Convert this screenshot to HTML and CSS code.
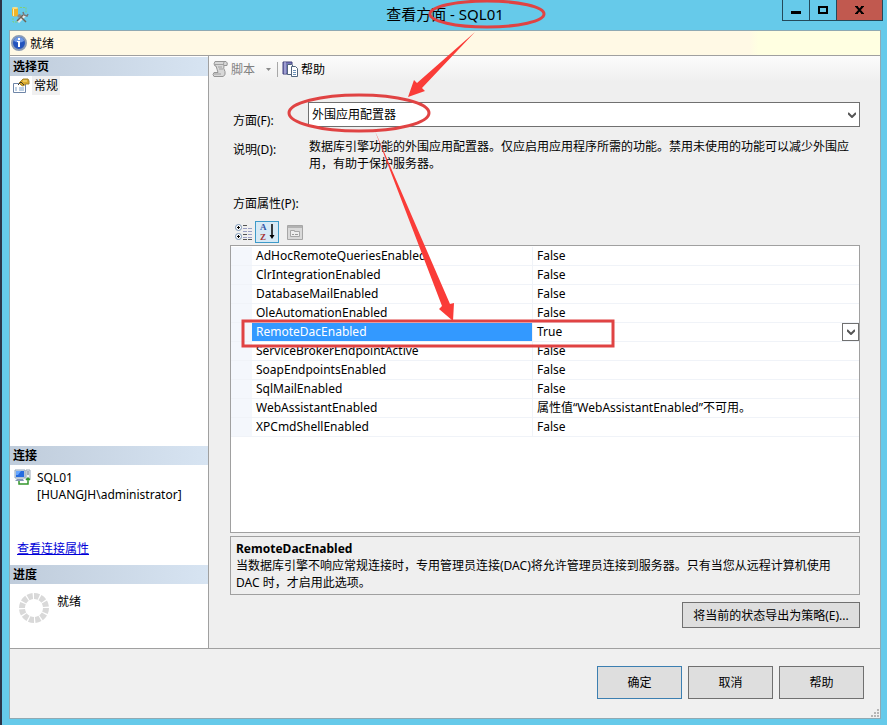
FILE: index.html
```html
<!DOCTYPE html>
<html lang="zh-CN">
<head>
    <meta charset="UTF-8">
    <meta name="viewport" content="width=device-width, initial-scale=1.0">
    <title>查看方面 - SQL01</title>
    <link rel="stylesheet" href="styles.css">
</head>
<body>
    <div class="window">
        <header class="titlebar">
            <svg class="app-icon" width="18" height="18" viewBox="0 0 18 18">
                <path d="M1 2v7c0 2 6 2 6 0V2z" fill="#f0b428"/>
                <path d="M2 3v7h1V3z" fill="#fff0a8"/>
                <ellipse cx="4" cy="2" rx="3" ry="1" fill="#fbe08a"/>
                <path d="M9 1.500h6v5M2 12v4h4" fill="none" stroke="#7fcf7a" stroke-dasharray="2 1"/>
                <path d="M7 16l7-7" stroke="#e8e8e8" stroke-width="3"/>
                <path d="M6 15l6-6M8 9l7 7" stroke="#6d6455" stroke-width="1.500"/>
                <path d="M12 6l1 3 3 1 1-2" fill="none" stroke="#777" stroke-width="1.500"/>
                <path d="M6 10l2-2 3 1-3 3z" fill="#8b8b8b"/>
            </svg>
            <h1>查看方面 - SQL01</h1>
            <div class="window-buttons">
                <button class="win-btn" aria-label="最小化">
                    <svg width="10" height="10" viewBox="0 0 10 10"><path d="M0 6h10v3H0z"/></svg>
                </button>
                <button class="win-btn" aria-label="最大化">
                    <svg width="10" height="8" viewBox="0 0 10 8"><path d="M1 1h8v6H1z" fill="none" stroke="#000" stroke-width="2"/></svg>
                </button>
                <button class="win-btn close" aria-label="关闭">
                    <svg width="10" height="8" viewBox="0 0 10 8"><path d="M1 0l7 8M8 0L1 8" stroke="#000" stroke-width="2"/><path d="M0 0h3v1H0zM6 0h3v1H6zM0 7h3v1H0zM6 7h3v1H6z"/></svg>
                </button>
            </div>
        </header>

        <div class="client">
            <div class="status">
                <svg width="16" height="16" viewBox="0 0 16 16">
                    <circle cx="8" cy="8" r="7" fill="#2354bd" stroke="#8a9bb5" stroke-width="2"/>
                    <path d="M3 6a5 4 0 0 1 10 0q-5 3-10 0" fill="#6f9ae6"/>
                    <path d="M7 3h2v2H7zM6 6h3v6H7V7H6z" fill="#fff"/>
                </svg>
                <span>就绪</span>
            </div>

            <div class="content">
                <aside class="sidebar">
                    <section class="pages">
                        <h2>选择页</h2>
                        <a href="#" class="page-link">
                            <svg width="17" height="16" viewBox="0 0 17 16">
                                <path d="M.5 5.500h12v9H.5z" fill="#fff" stroke="#6f86a8"/>
                                <path d="M2 10h2M2 12h2M6 10h5M6 12h5" stroke="#7aa0c8"/>
                                <path d="M6 5l4-4h5l1 2v3h-3l-3 2-2-1z" fill="#d9a92c" stroke="#a3852f"/>
                                <path d="M10 3h4" stroke="#ffe88c"/>
                                <path d="M5 7l3-3 3 3" fill="none" stroke="#443c28"/>
                            </svg>
                            <span>常规</span>
                        </a>
                    </section>
                    <section class="connection">
                        <h2>连接</h2>
                        <div class="server">
                            <svg width="17" height="16" viewBox="0 0 17 16">
                                <path d="M1 1h10v8H1z" fill="#d8e2ee" stroke="#8ea5bd"/>
                                <path d="M2 2h8v6H2z" fill="#246be0"/>
                                <path d="M2 2h5L4 6H2z" fill="#65a6ff"/>
                                <path d="M3 10h6l1 2H1z" fill="#8499b5"/>
                                <path d="M12 1h4v9h-4z" fill="#eef2f6" stroke="#97a6b5"/>
                                <path d="M13 3h2M13 5h2" stroke="#5f7184"/>
                                <path d="M5 12v3h9V9M12 11l2-2 2 2" fill="none" stroke="#35962d" stroke-width="1.500"/>
                            </svg>
                            <p>SQL01<br>[HUANGJH\administrator]</p>
                        </div>
                        <a href="#" class="properties-link">查看连接属性</a>
                    </section>
                    <section class="progress">
                        <h2>进度</h2>
                        <div class="progress-row">
                            <svg width="30" height="30" viewBox="0 0 30 30">
                                <circle cx="15" cy="15" r="12" pathLength="120" fill="none" stroke="#d9d9d9" stroke-width="6" stroke-dasharray="8 2"/>
                            </svg>
                            <span>就绪</span>
                        </div>
                    </section>
                </aside>

                <main class="main">
                    <div class="toolbar">
                        <button class="tool" disabled>
                            <svg width="17" height="16" viewBox="0 0 17 16">
                                <path d="M3 .5h11q2 1 1 4h-3q-1 3 1 6 1 4-2 5H2q-2-2 0-4h4Q5 8 4 5H3q-2-2 0-4.500z" fill="#d8d8d8" stroke="#969696"/>
                                <path d="M3 3.500h9M12 5q-1-2 0-4M2 13h7M6 6h4M7 8h4" fill="none" stroke="#a2a2a2"/>
                            </svg>
                            <span>脚本</span>
                            <svg class="caret" width="5" height="3" viewBox="0 0 5 3"><path d="M0 0h5L2.500 3z" fill="#8a8a8a"/></svg>
                        </button>
                        <span class="separator"></span>
                        <button class="tool">
                            <svg width="17" height="16" viewBox="0 0 17 16">
                                <path d="M1 1h9v12H1z" fill="#7676b8" stroke="#42427d"/>
                                <path d="M3 1v12" stroke="#c5c5e8"/>
                                <path d="M5.500 3.500h4l2 2v8h-6z" fill="#fff" stroke="#51657d"/>
                                <path d="M9.500 5.500h4l2 2v8h-6z" fill="#fff" stroke="#51657d"/>
                                <path d="M11 9.500h3M11 11.500h3M11 13.500h3" stroke="#6c92b8"/>
                            </svg>
                            <span>帮助</span>
                        </button>
                    </div>

                    <div class="form">
                        <div class="field">
                            <label for="facet">方面(F):</label>
                            <div class="select-box">
                                <select id="facet">
                                    <option>外围应用配置器</option>
                                </select>
                                <svg class="chevron" width="8" height="6" viewBox="0 0 8 6"><path d="M0 1l4 4 4-4" fill="none" stroke="#555" stroke-width="2"/></svg>
                            </div>
                        </div>
                        <div class="description">
                            <span>说明(D):</span>
                            <p>数据库引擎功能的外围应用配置器。仅应启用应用程序所需的功能。禁用未使用的功能可以减少外围应用，有助于保护服务器。</p>
                        </div>

                        <p class="grid-label">方面属性(P):</p>
                        <div class="grid-tools">
                            <button aria-label="按分类顺序">
                                <svg width="17" height="16" viewBox="0 0 17 16">
                                    <circle cx="3.500" cy="3.500" r="3" fill="#fff" stroke="#7590b0"/>
                                    <circle cx="3.500" cy="12.500" r="3" fill="#fff" stroke="#7590b0"/>
                                    <path d="M2 3.500h3M3.500 2v3M2 12.500h3M3.500 11v3" stroke="#000"/>
                                    <path d="M8 1.500h4M8 10.500h4M8 15.500h4M13 15.500h4" stroke="#555"/>
                                    <path d="M8 4.500h4M13 4.500h4M8 7.500h4M13 7.500h4M13 10.500h4M8 13.500h4M13 13.500h4" stroke="#9a9fc4"/>
                                </svg>
                            </button>
                            <button class="pressed" aria-label="按字母顺序">
                                <svg width="18" height="20" viewBox="0 0 18 20">
                                    <text class="letter-a" x="2" y="8">A</text>
                                    <text class="letter-z" x="2" y="18">Z</text>
                                    <path d="M14 2v13" stroke="#000" stroke-width="1.500"/>
                                    <path d="M11.500 13h5L14 17z"/>
                                </svg>
                            </button>
                            <button aria-label="属性页" disabled>
                                <svg width="16" height="15" viewBox="0 0 16 15">
                                    <path d="M.5.5h15v14H.5z" fill="#d9d9d9" stroke="#a6a6a6"/>
                                    <path d="M1 2h14" stroke="#b2b2b2" stroke-width="2"/>
                                    <path d="M3.500 5.500h4v1h5v5h-9z" fill="#eee" stroke="#a6a6a6"/>
                                    <path d="M5 9.500h2M8 9.500h3" stroke="#999"/>
                                </svg>
                            </button>
                        </div>

                        <div class="grid">
                            <table>
                                <tbody>
                                    <tr><td class="gutter"></td><th scope="row">AdHocRemoteQueriesEnabled</th><td>False</td></tr>
                                    <tr><td class="gutter"></td><th scope="row">ClrIntegrationEnabled</th><td>False</td></tr>
                                    <tr><td class="gutter"></td><th scope="row">DatabaseMailEnabled</th><td>False</td></tr>
                                    <tr><td class="gutter"></td><th scope="row">OleAutomationEnabled</th><td>False</td></tr>
                                    <tr class="selected">
                                        <td class="gutter"></td>
                                        <th scope="row">RemoteDacEnabled</th>
                                        <td>
                                            <div class="value">
                                                <span>True</span>
                                                <button aria-label="选择值">
                                                    <svg width="8" height="6" viewBox="0 0 8 6"><path d="M0 1l4 4 4-4" fill="none" stroke="#555" stroke-width="2"/></svg>
                                                </button>
                                            </div>
                                        </td>
                                    </tr>
                                    <tr><td class="gutter"></td><th scope="row">ServiceBrokerEndpointActive</th><td>False</td></tr>
                                    <tr><td class="gutter"></td><th scope="row">SoapEndpointsEnabled</th><td>False</td></tr>
                                    <tr><td class="gutter"></td><th scope="row">SqlMailEnabled</th><td>False</td></tr>
                                    <tr><td class="gutter"></td><th scope="row">WebAssistantEnabled</th><td>属性值“WebAssistantEnabled”不可用。</td></tr>
                                    <tr><td class="gutter"></td><th scope="row">XPCmdShellEnabled</th><td>False</td></tr>
                                </tbody>
                            </table>
                        </div>

                        <div class="help-box">
                            <h3>RemoteDacEnabled</h3>
                            <p>当数据库引擎不响应常规连接时，专用管理员连接(DAC)将允许管理员连接到服务器。只有当您从远程计算机使用 DAC 时，才启用此选项。</p>
                        </div>
                        <button class="export-btn">将当前的状态导出为策略(E)...</button>
                    </div>
                </main>
            </div>

            <footer class="footer">
                <button class="default">确定</button>
                <button>取消</button>
                <button>帮助</button>
                <svg class="grip" width="8" height="8" viewBox="0 0 8 8"><path d="M6 0h2v2H6zM3 3h2v2H3zM6 3h2v2H6zM0 6h2v2H0zM3 6h2v2H3zM6 6h2v2H6z" fill="#b5b5b5"/></svg>
            </footer>
        </div>
    </div>

    <!-- red markup over the dialog -->
    <svg class="markup" width="640" height="360" viewBox="0 0 640 360">
        <ellipse cx="487" cy="14" rx="57" ry="13"/>
        <ellipse cx="359" cy="113" rx="70" ry="18"/>
        <rect x="243" y="321" width="370" height="25"/>
        <path class="arrow" d="M475 32L417 83l-3-3-6 17 17-6-3-3z"/>
        <path class="arrow" d="M375 131L442 306l-3 3 14 12 1-18-4 1z"/>
    </svg>
</body>
</html>
```
FILE: styles.css
```css
*, *::before, *::after {
    box-sizing: border-box;
}

body {
    margin: 0;
    font-family: "Noto Sans", "Noto Sans CJK SC", sans-serif;
    font-size: 12px;
    line-height: 17px;
    color: #000;
}

h1, h2, h3, p {
    margin: 0;
    font-size: 12px;
}

button, select {
    font: inherit;
    color: inherit;
}

.window {
    display: flex;
    flex-direction: column;
    min-height: 100vh;
    padding: 0 6px 6px 7px;
    background-color: #66caea;
    border-left: 2px solid #2c3448;
}

/* Title bar */
.titlebar {
    display: grid;
    grid-template-columns: 120px 1fr 120px;
    height: 30px;
}

.app-icon {
    margin: 6px 0 0 2px;
}

.titlebar h1 {
    font-size: 15px;
    font-weight: normal;
    line-height: 29px;
    text-align: center;
}

.window-buttons {
    display: flex;
    justify-content: flex-end;
    align-items: flex-start;
    margin-right: -2px;
}

.win-btn {
    display: flex;
    align-items: center;
    justify-content: center;
    width: 28px;
    height: 21px;
    margin-left: -1px;
    padding: 0;
    background-color: #66caea;
    border: 1px solid #24495a;
    border-top: 0;
}

.win-btn.close {
    width: 47px;
    background-color: #c1594f;
}

/* Client area */
.client {
    flex: 1;
    display: flex;
    flex-direction: column;
    background-color: #f0f0f0;
    border: 1px solid #8fa9b3;
}

.status {
    display: flex;
    align-items: center;
    gap: 3px;
    height: 25px;
    padding-left: 1px;
    background: linear-gradient(90deg, #fff9e5 85%, #ffffe1 86%);
    border-bottom: 1px solid #a0a0a0;
}

.content {
    flex: 1;
    display: flex;
    border-bottom: 1px solid #a0a0a0;
}

.sidebar {
    display: flex;
    flex-direction: column;
    width: 199px;
    background-color: #fff;
    border-right: 1px solid #a0a0a0;
}

.sidebar h2 {
    height: 19px;
    padding-left: 3px;
    line-height: 19px;
    background: linear-gradient(90deg, #bfccdb, #d7e4f2);
}

.pages {
    flex: 1;
    padding-top: 1px;
}

.page-link {
    display: flex;
    align-items: center;
    gap: 2px;
    padding-left: 3px;
    color: #000;
    text-decoration: none;
}

.page-link span {
    padding: 1px 2px;
    background-color: #f0f0f0;
}

.server {
    display: flex;
    gap: 6px;
    padding: 4px 4px 0;
}

.properties-link {
    display: inline-block;
    margin: 37px 0 8px 7px;
    color: #0000d8;
}

.progress-row {
    display: flex;
    gap: 8px;
    height: 64px;
    padding: 9px 9px 0;
}

/* Main pane */
.main {
    flex: 1;
    display: flex;
    flex-direction: column;
    min-width: 0;
    background-color: #efefef;
}

.toolbar {
    display: flex;
    align-items: center;
    gap: 4px;
    height: 26px;
    padding-left: 3px;
    background: linear-gradient(#fcfcfc, #efefef);
}

.tool {
    display: flex;
    align-items: center;
    gap: 2px;
    padding: 0;
    background: none;
    border: 0;
}

.tool:disabled {
    color: #808080;
}

.caret {
    margin: 0 2px 0 9px;
}

.separator {
    width: 1px;
    height: 15px;
    background-color: #a8a8a8;
}

.form {
    flex: 1;
    display: flex;
    flex-direction: column;
    padding: 20px 20px 20px 21px;
}

.field,
.description {
    display: grid;
    grid-template-columns: 76px 1fr;
    padding-left: 3px;
}

.field label {
    padding-top: 10px;
}

.select-box {
    position: relative;
    margin-left: -1px;
}

.select-box select {
    display: block;
    width: 100%;
    height: 25px;
    padding: 0 3px;
    appearance: none;
    background-color: #fff;
    border: 1px solid #707070;
    border-radius: 0;
}

.chevron {
    position: absolute;
    top: 10px;
    right: 4px;
}

.description {
    padding-top: 9px;
}

.description span {
    padding-top: 3px;
}

.grid-label {
    margin-top: 23px;
    padding-left: 3px;
}

.grid-tools {
    display: flex;
    gap: 3px;
    height: 33px;
    padding: 9px 0 2px 1px;
}

.grid-tools button {
    display: flex;
    align-items: center;
    justify-content: center;
    width: 24px;
    height: 22px;
    padding: 0;
    background: none;
    border: 0;
}

.grid-tools button:last-child {
    margin-left: 1px;
}

.grid-tools .pressed {
    margin-left: -3px;
    background-color: #d6e9f5;
    border: 1px solid #3d9ac9;
}

.letter-a,
.letter-z {
    font-family: "Liberation Serif", serif;
    font-size: 9px;
    font-weight: bold;
    fill: #3156a5;
}

.letter-z {
    fill: #a53232;
}

.grid {
    flex: 1;
    padding-top: 1px;
    background-color: #fff;
    border: 1px solid #a0a0a0;
}

.grid table {
    width: 100%;
    table-layout: fixed;
    border-collapse: separate;
    border-spacing: 0;
}

.grid th,
.grid td {
    height: 19px;
    padding: 0 4px;
    line-height: 18px;
    font-weight: normal;
    text-align: left;
    white-space: nowrap;
    border-bottom: 1px solid #f0f3f8;
}

.grid th {
    width: 281px;
    border-right: 1px solid #f0f3f8;
}

.grid .gutter {
    width: 21px;
    background-color: #f4f7fc;
}

.grid .selected th {
    color: #fff;
    background-color: #3399ff;
}

.value {
    display: flex;
    justify-content: space-between;
    height: 18px;
    margin-right: -4px;
}

.value button {
    display: flex;
    align-items: center;
    justify-content: center;
    width: 17px;
    height: 18px;
    padding: 0;
    background-color: #fff;
    border: 1px solid #707070;
}

.help-box {
    height: 59px;
    margin-top: 3px;
    padding: 3px 20px 2px 5px;
    border: 1px solid #a0a0a0;
}

.export-btn {
    align-self: flex-end;
    width: 178px;
    height: 26px;
    margin-top: 7px;
    padding: 0;
    background-color: #dedede;
    border: 1px solid #707070;
}

/* Footer */
.footer {
    position: relative;
    display: flex;
    justify-content: flex-end;
    gap: 6px;
    padding: 17px 16px 19px;
}

.footer button {
    width: 85px;
    height: 33px;
    background-color: #dedede;
    border: 1px solid #707070;
}

.footer .default {
    border-color: #3c7fb1;
}

.grip {
    position: absolute;
    right: 1px;
    bottom: 1px;
}

.markup {
    position: absolute;
    top: 0;
    left: 0;
    pointer-events: none;
    fill: none;
    stroke: #e04343;
    stroke-width: 3;
}

.markup .arrow {
    fill: #fa3c38;
    stroke: none;
}
```
